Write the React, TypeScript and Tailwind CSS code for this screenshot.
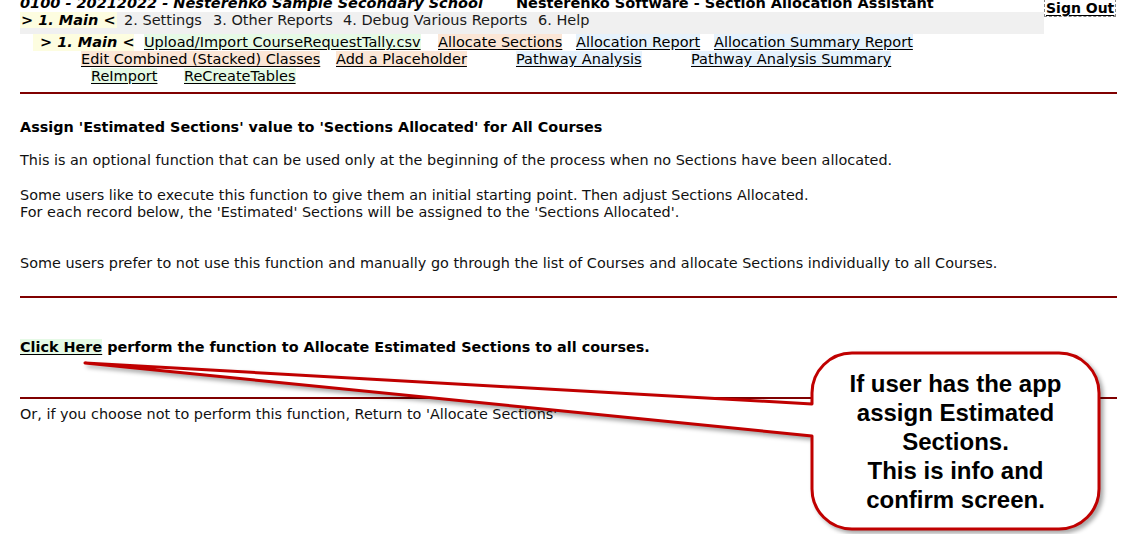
import React from "react";

const yellow = "bg-[#fdfde0]";
const green = "bg-[#e6fae6]";
const orange = "bg-[#fbe6d6]";
const blue = "bg-[#e6f2fc]";

function L({ children, bg }: { children: React.ReactNode; bg: string }) {
  return <span className={`${bg} underline underline-offset-[2px] text-black`}>{children}</span>;
}

export default function App() {
  return (
    <div className="relative w-[1137px] h-[534px] overflow-hidden bg-white text-black font-['DejaVu_Sans','Verdana',sans-serif]">
      <div className="px-[20px]">
        {/* top header */}
        <div className="flex -mt-[5px]">
          <div className="w-[1024px]">
            <div className="flex h-[17px] leading-[17px] text-[14.5px] font-bold whitespace-nowrap">
              <span className="italic">0100 - 20212022 - Nesterenko Sample Secondary School</span>
              <span className="ml-[33px]">Nesterenko Software - Section Allocation Assistant</span>
            </div>
            <div className="flex items-start h-[22px] bg-[#f0f0f0] text-[14.5px] leading-[16px] whitespace-nowrap text-[#1a1a1a]">
              <div className="w-[104px]">
                <span className={`${yellow} px-[1px] font-bold italic text-black`}>&gt; 1. Main &lt;</span>
              </div>
              <div className="w-[89px]">2. Settings</div>
              <div className="w-[130px]">3. Other Reports</div>
              <div className="w-[195px]">4. Debug Various Reports</div>
              <div>6. Help</div>
            </div>
          </div>
          <div className="mt-[4px] self-start border border-dashed border-[#888] px-[1px] text-[14px] leading-[16px] font-bold">
            <span className="underline underline-offset-[2px]">Sign Out</span>
          </div>
        </div>

        {/* sub nav */}
        <div className="text-[14.5px] leading-[17px] whitespace-nowrap">
          <div className="flex h-[17px] pl-[13px]">
            <div className={`w-[101px] ${yellow} pl-[7px] font-bold italic`}>&gt; 1. Main &lt;</div>
            <div className="ml-[10px] w-[294px]">
              <L bg={green}>Upload/Import CourseRequestTally.csv</L>
            </div>
            <div className="w-[138px]">
              <L bg={orange}>Allocate Sections</L>
            </div>
            <div className="w-[138px]">
              <L bg={blue}>Allocation Report</L>
            </div>
            <div>
              <L bg={blue}>Allocation Summary Report</L>
            </div>
          </div>
          <div className="flex h-[17px] pl-[61px]">
            <div className="w-[255px]">
              <L bg={orange}>Edit Combined (Stacked) Classes</L>
            </div>
            <div className="w-[180px]">
              <L bg={orange}>Add a Placeholder</L>
            </div>
            <div className="w-[175px]">
              <L bg={blue}>Pathway Analysis</L>
            </div>
            <div>
              <L bg={blue}>Pathway Analysis Summary</L>
            </div>
          </div>
          <div className="flex h-[17px] pl-[71px]">
            <div className="w-[93px]">
              <L bg={green}>ReImport</L>
            </div>
            <div>
              <L bg={green}>ReCreateTables</L>
            </div>
          </div>
        </div>

        <div className="mt-[7px] h-[2px] bg-[#800000]" />

        {/* body */}
        <div className="text-[14.4px] leading-[17px] text-[#111]">
          <p className="mt-[25px] font-bold text-black">
            Assign 'Estimated Sections' value to 'Sections Allocated' for All Courses
          </p>
          <p className="mt-[16px]">
            This is an optional function that can be used only at the beginning of the process when no Sections have been allocated.
          </p>
          <p className="mt-[18px]">
            Some users like to execute this function to give them an initial starting point. Then adjust Sections Allocated.
            <br />
            For each record below, the 'Estimated' Sections will be assigned to the 'Sections Allocated'.
          </p>
          <p className="mt-[34px]">
            Some users prefer to not use this function and manually go through the list of Courses and allocate Sections individually to all Courses.
          </p>
        </div>

        <div className="mt-[24px] h-[2px] bg-[#800000]" />

        <p className="mt-[41px] text-[14.4px] leading-[17px] font-bold text-black">
          <span className={`${green} underline underline-offset-[2px]`}>Click Here</span> perform the function to Allocate Estimated Sections to all courses.
        </p>

        <div className="mt-[41px] h-[2px] bg-[#800000]" />

        <p className="mt-[7px] text-[14.4px] leading-[17px] text-[#111]">
          Or, if you choose not to perform this function, Return to 'Allocate Sections'
        </p>
      </div>

      {/* callout annotation */}
      <svg
        className="absolute left-0 top-0 pointer-events-none drop-shadow-[3px_3px_2px_rgba(0,0,0,0.35)]"
        width="1137"
        height="534"
        viewBox="0 0 1137 534"
      >
        <path
          d="M85,363 L812,404 L812,393 A40,40 0 0 1 852,353 L1059,353 A40,40 0 0 1 1099,393 L1099,489 A40,40 0 0 1 1059,529 L852,529 A40,40 0 0 1 812,489 L812,436 Z"
          fill="#ffffff"
          stroke="#c00000"
          strokeWidth="3"
          strokeLinejoin="round"
        />
      </svg>
      <div className="absolute left-[812px] top-[353px] w-[287px] h-[176px] flex items-center justify-center text-center font-['Liberation_Sans','Arial',sans-serif] font-bold text-[24px] leading-[29px] text-black">
        <div>
          If user has the app
          <br />
          assign Estimated
          <br />
          Sections.
          <br />
          This is info and
          <br />
          confirm screen.
        </div>
      </div>
    </div>
  );
}
